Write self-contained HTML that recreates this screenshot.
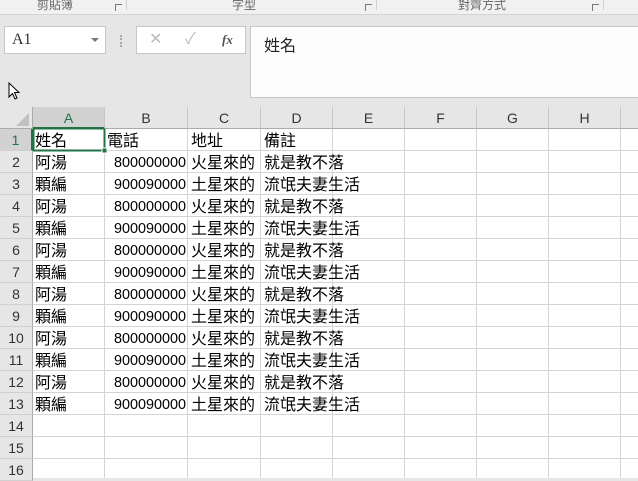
<!DOCTYPE html><html><head><meta charset="utf-8"><style>
*{margin:0;padding:0;box-sizing:border-box}
body{width:638px;height:478px;overflow:hidden;background:#e6e6e6;font-family:"Liberation Sans","Noto Sans CJK TC",sans-serif;position:relative}
.a{position:absolute}
.rib{left:0;top:0;width:638px;height:15px;background:#f1f1f1;border-bottom:1px solid #d4d4d4;font-size:12px;color:#666}
.grid{left:0;top:107px;width:638px;height:371px;background:#fff}
.ch{position:absolute;top:107px;height:22px;background:#e6e6e6;border-right:1px solid #c8c8c8;border-bottom:1px solid #ababab;text-align:center;font-size:14px;line-height:22px;color:#333}
.rh{position:absolute;left:0;width:33px;height:22px;background:#e6e6e6;border-bottom:1px solid #d0d0d0;border-right:1px solid #ababab;text-align:center;font-size:14px;line-height:22px;color:#333}
.c{position:absolute;height:22px;font-size:16px;line-height:23px;white-space:nowrap;color:#000;font-family:"Liberation Sans","Noto Sans CJK TC",sans-serif}
.n{position:absolute;left:105px;width:81px;text-align:right;height:22px;font-size:14.4px;line-height:23px;color:#000}
</style></head><body>
<div class="a rib"><span class="a" style="left:37px;top:-4px">剪貼簿</span><span class="a" style="left:232px;top:-4px">字型</span><span class="a" style="left:458px;top:-4px">對齊方式</span>
<span class="a" style="left:126px;top:0;width:1px;height:10px;background:#d0d0d0"></span><span class="a" style="left:376px;top:0;width:1px;height:10px;background:#d0d0d0"></span><span class="a" style="left:603px;top:0;width:1px;height:10px;background:#d0d0d0"></span>
<span class="a" style="left:115px;top:4px;width:7px;height:7px;border-left:1px solid #777;border-top:1px solid #777"></span><span class="a" style="left:365px;top:4px;width:7px;height:7px;border-left:1px solid #777;border-top:1px solid #777"></span><span class="a" style="left:592px;top:4px;width:7px;height:7px;border-left:1px solid #777;border-top:1px solid #777"></span></div>
<div class="a" style="left:4px;top:26px;width:102px;height:28px;background:#fff;border:1px solid #c6c6c6;font-size:16px;line-height:26px;padding-left:7px;color:#333;font-family:'Liberation Serif',serif">A1</div>
<div class="a" style="left:91px;top:38px;border-left:4px solid transparent;border-right:4px solid transparent;border-top:4px solid #777"></div>
<div class="a" style="left:120px;top:35px;width:2px;height:12px;border-left:2px dotted #aaa"></div>
<div class="a" style="left:136px;top:26px;width:110px;height:28px;background:#fff;border:1px solid #c6c6c6;color:#bbb;font-size:16px;line-height:26px"><span class="a" style="left:12px">✕</span><span class="a" style="left:48px">✓</span><span class="a" style="left:85px;color:#555;font-family:'Liberation Serif',serif;font-style:italic;font-size:13px;font-weight:bold">fx</span></div>
<div class="a" style="left:250px;top:26px;width:400px;height:72px;background:#fdfdfd;border:1px solid #c6c6c6;font-size:16px;padding:5px 13px;color:#222">姓名</div>
<svg class="a" style="left:8px;top:82px" width="14" height="20"><path d="M1 1 L1 15 L4.5 11.5 L7 17 L9 16 L6.5 10.5 L11 10.5 Z" fill="#fff" stroke="#000"/></svg>
<div class="a grid"></div>
<div class="a" style="left:0;top:107px;width:33px;height:22px;background:#e6e6e6;border-right:1px solid #ababab;border-bottom:1px solid #ababab"></div>
<svg class="a" style="left:16px;top:113px" width="14" height="14"><path d="M13 0 L13 13 L0 13 Z" fill="#c0c0c0"/></svg>
<div class="ch" style="left:33px;width:72px;background:#d2d2d2;border-bottom:2px solid #217346;color:#217346">A</div>
<div class="ch" style="left:105px;width:83px">B</div><div class="ch" style="left:188px;width:73px">C</div><div class="ch" style="left:261px;width:72px">D</div><div class="ch" style="left:333px;width:72px">E</div><div class="ch" style="left:405px;width:72px">F</div><div class="ch" style="left:477px;width:72px">G</div><div class="ch" style="left:549px;width:72px">H</div><div class="ch" style="left:621px;width:30px"></div>
<svg class="a" style="left:33px;top:129px" width="605" height="349">
<g stroke="#d4d4d4" stroke-width="1">
<line x1="71.5" y1="0" x2="71.5" y2="349"/><line x1="154.5" y1="0" x2="154.5" y2="349"/><line x1="227.5" y1="0" x2="227.5" y2="349"/><line x1="299.5" y1="0" x2="299.5" y2="349"/><line x1="371.5" y1="0" x2="371.5" y2="349"/><line x1="443.5" y1="0" x2="443.5" y2="349"/><line x1="515.5" y1="0" x2="515.5" y2="349"/><line x1="587.5" y1="0" x2="587.5" y2="349"/>
<line x1="0" y1="21.5" x2="605" y2="21.5"/><line x1="0" y1="43.5" x2="605" y2="43.5"/><line x1="0" y1="65.5" x2="605" y2="65.5"/><line x1="0" y1="87.5" x2="605" y2="87.5"/><line x1="0" y1="109.5" x2="605" y2="109.5"/><line x1="0" y1="131.5" x2="605" y2="131.5"/><line x1="0" y1="153.5" x2="605" y2="153.5"/><line x1="0" y1="175.5" x2="605" y2="175.5"/><line x1="0" y1="197.5" x2="605" y2="197.5"/><line x1="0" y1="219.5" x2="605" y2="219.5"/><line x1="0" y1="241.5" x2="605" y2="241.5"/><line x1="0" y1="263.5" x2="605" y2="263.5"/><line x1="0" y1="285.5" x2="605" y2="285.5"/><line x1="0" y1="307.5" x2="605" y2="307.5"/><line x1="0" y1="329.5" x2="605" y2="329.5"/>
</g>
<rect x="0.5" y="-0.5" width="71" height="22" fill="none" stroke="#217346" stroke-width="2"/><rect x="69" y="19" width="5" height="5" fill="#217346" stroke="#fff"/>
</svg>
<div class="rh" style="top:129px;background:#d2d2d2;color:#217346;border-right:2px solid #217346">1</div>
<div class="rh" style="top:151px">2</div><div class="rh" style="top:173px">3</div><div class="rh" style="top:195px">4</div><div class="rh" style="top:217px">5</div><div class="rh" style="top:239px">6</div><div class="rh" style="top:261px">7</div><div class="rh" style="top:283px">8</div><div class="rh" style="top:305px">9</div><div class="rh" style="top:327px">10</div><div class="rh" style="top:349px">11</div><div class="rh" style="top:371px">12</div><div class="rh" style="top:393px">13</div><div class="rh" style="top:415px">14</div><div class="rh" style="top:437px">15</div><div class="rh" style="top:459px">16</div>
<div class="c" style="left:35px;top:130px">姓名</div><div class="c" style="left:107px;top:130px">電話</div><div class="c" style="left:191px;top:130px">地址</div><div class="c" style="left:264px;top:130px">備註</div>
<div class="c" style="left:35px;top:152px">阿湯</div><div class="n" style="top:152px">800000000</div><div class="c" style="left:191px;top:152px">火星來的</div><div class="c" style="left:264px;top:152px">就是教不落</div>
<div class="c" style="left:35px;top:174px">顆編</div><div class="n" style="top:174px">900090000</div><div class="c" style="left:191px;top:174px">土星來的</div><div class="c" style="left:264px;top:174px">流氓夫妻生活</div>
<div class="c" style="left:35px;top:196px">阿湯</div><div class="n" style="top:196px">800000000</div><div class="c" style="left:191px;top:196px">火星來的</div><div class="c" style="left:264px;top:196px">就是教不落</div>
<div class="c" style="left:35px;top:218px">顆編</div><div class="n" style="top:218px">900090000</div><div class="c" style="left:191px;top:218px">土星來的</div><div class="c" style="left:264px;top:218px">流氓夫妻生活</div>
<div class="c" style="left:35px;top:240px">阿湯</div><div class="n" style="top:240px">800000000</div><div class="c" style="left:191px;top:240px">火星來的</div><div class="c" style="left:264px;top:240px">就是教不落</div>
<div class="c" style="left:35px;top:262px">顆編</div><div class="n" style="top:262px">900090000</div><div class="c" style="left:191px;top:262px">土星來的</div><div class="c" style="left:264px;top:262px">流氓夫妻生活</div>
<div class="c" style="left:35px;top:284px">阿湯</div><div class="n" style="top:284px">800000000</div><div class="c" style="left:191px;top:284px">火星來的</div><div class="c" style="left:264px;top:284px">就是教不落</div>
<div class="c" style="left:35px;top:306px">顆編</div><div class="n" style="top:306px">900090000</div><div class="c" style="left:191px;top:306px">土星來的</div><div class="c" style="left:264px;top:306px">流氓夫妻生活</div>
<div class="c" style="left:35px;top:328px">阿湯</div><div class="n" style="top:328px">800000000</div><div class="c" style="left:191px;top:328px">火星來的</div><div class="c" style="left:264px;top:328px">就是教不落</div>
<div class="c" style="left:35px;top:350px">顆編</div><div class="n" style="top:350px">900090000</div><div class="c" style="left:191px;top:350px">土星來的</div><div class="c" style="left:264px;top:350px">流氓夫妻生活</div>
<div class="c" style="left:35px;top:372px">阿湯</div><div class="n" style="top:372px">800000000</div><div class="c" style="left:191px;top:372px">火星來的</div><div class="c" style="left:264px;top:372px">就是教不落</div>
<div class="c" style="left:35px;top:394px">顆編</div><div class="n" style="top:394px">900090000</div><div class="c" style="left:191px;top:394px">土星來的</div><div class="c" style="left:264px;top:394px">流氓夫妻生活</div>
</body></html>
